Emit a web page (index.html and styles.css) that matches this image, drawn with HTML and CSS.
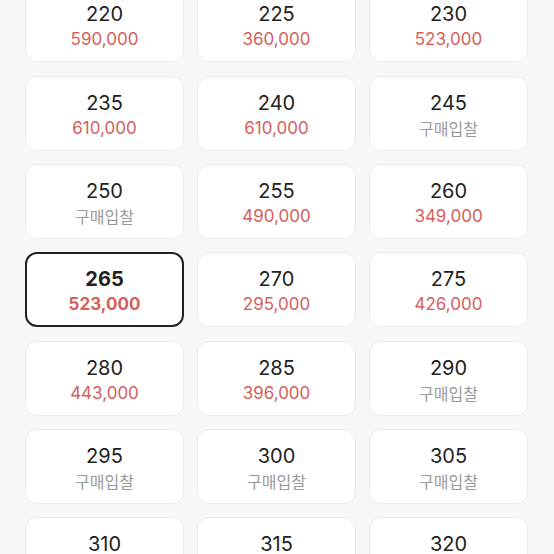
FILE: index.html
```html
<!DOCTYPE html>
<html lang="ko">
<head>
    <meta charset="UTF-8">
    <meta name="viewport" content="width=device-width, initial-scale=1.0">
    <title>사이즈 선택</title>
    <link rel="stylesheet" href="styles.css">
</head>
<body>
    <div class="size-grid">
        <div class="size-card"><div class="size">220</div><div class="price">590,000</div></div>
        <div class="size-card"><div class="size">225</div><div class="price">360,000</div></div>
        <div class="size-card"><div class="size">230</div><div class="price">523,000</div></div>

        <div class="size-card"><div class="size">235</div><div class="price">610,000</div></div>
        <div class="size-card"><div class="size">240</div><div class="price">610,000</div></div>
        <div class="size-card"><div class="size">245</div><div class="price bid">구매입찰</div></div>

        <div class="size-card"><div class="size">250</div><div class="price bid">구매입찰</div></div>
        <div class="size-card"><div class="size">255</div><div class="price">490,000</div></div>
        <div class="size-card"><div class="size">260</div><div class="price">349,000</div></div>

        <div class="size-card selected"><div class="size">265</div><div class="price">523,000</div></div>
        <div class="size-card"><div class="size">270</div><div class="price">295,000</div></div>
        <div class="size-card"><div class="size">275</div><div class="price">426,000</div></div>

        <div class="size-card"><div class="size">280</div><div class="price">443,000</div></div>
        <div class="size-card"><div class="size">285</div><div class="price">396,000</div></div>
        <div class="size-card"><div class="size">290</div><div class="price bid">구매입찰</div></div>

        <div class="size-card"><div class="size">295</div><div class="price bid">구매입찰</div></div>
        <div class="size-card"><div class="size">300</div><div class="price bid">구매입찰</div></div>
        <div class="size-card"><div class="size">305</div><div class="price bid">구매입찰</div></div>

        <div class="size-card"><div class="size">310</div><div class="price bid">구매입찰</div></div>
        <div class="size-card"><div class="size">315</div><div class="price bid">구매입찰</div></div>
        <div class="size-card"><div class="size">320</div><div class="price bid">구매입찰</div></div>
    </div>
</body>
</html>
```

FILE: styles.css
```css
body {
    margin: 0;
    background-color: #f7f7f7;
    font-family: Inter, "Noto Sans CJK KR", sans-serif;
    color: #222;
    overflow: hidden;
}
.size-grid {
    display: grid;
    grid-template-columns: repeat(3, 159px);
    column-gap: 13px;
    row-gap: 13.3px;
    padding-left: 25px;
    margin-top: -12.6px;
}
.size-card {
    box-sizing: border-box;
    height: 75px;
    padding-top: 3px;
    background-color: #fff;
    border: 1px solid #ebebeb;
    border-radius: 12px;
    display: flex;
    flex-direction: column;
    align-items: center;
    justify-content: center;
    gap: 3px;
}
.size {
    font-size: 20px;
    line-height: 24px;
}
.price {
    font-size: 17px;
    line-height: 21px;
    color: #d4605a;
}
.price.bid {
    color: #999;
    font-size: 16px;
    font-family: "Noto Sans CJK KR", sans-serif;
}
.selected {
    border: 2px solid #222;
}
.selected .size,
.selected .price {
    font-weight: 700;
}
```
